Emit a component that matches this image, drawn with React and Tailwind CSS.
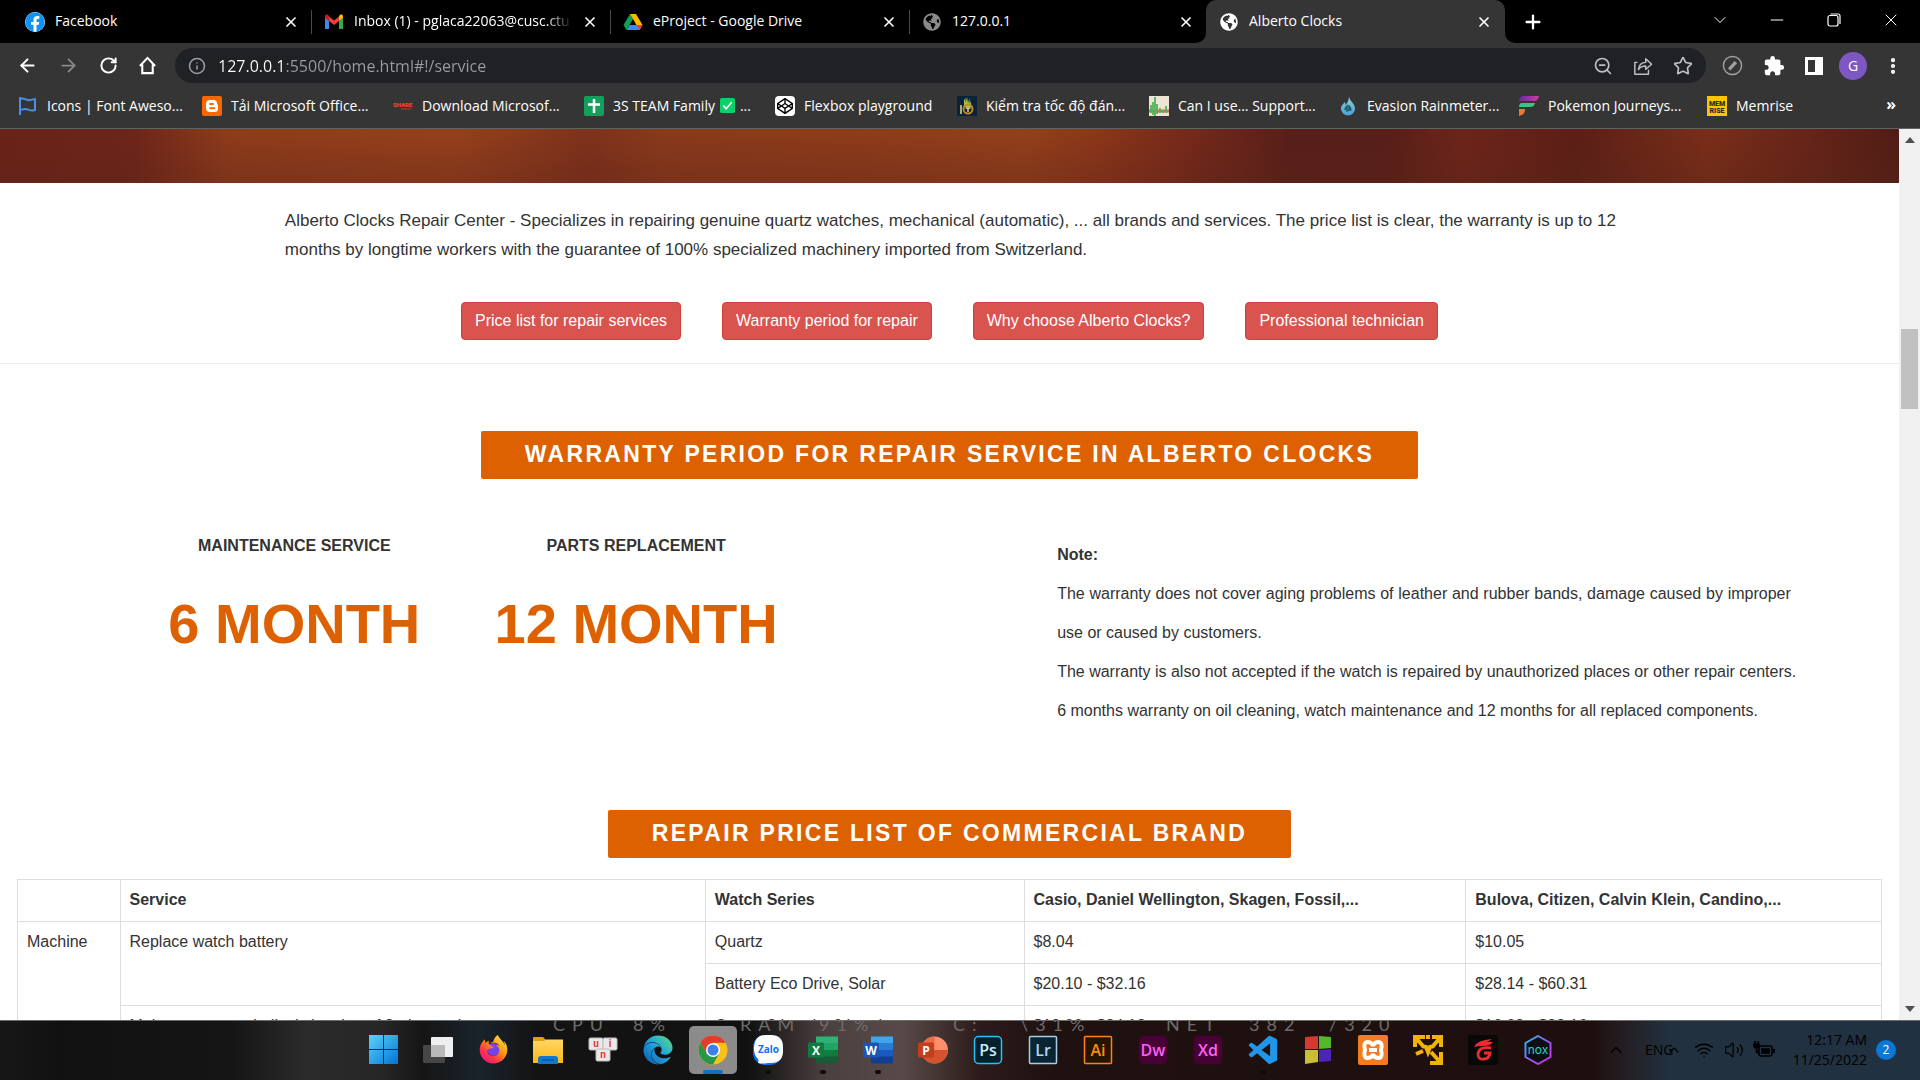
import React from "react";
import {
  ArrowLeft, ArrowRight, RotateCw, Info, ZoomOut, Star, X, Plus, ChevronDown, ChevronUp,
  Minus, EllipsisVertical, Wifi, Volume2,
} from "lucide-react";
import { FaFacebook, FaGlobeAmericas, FaEdge, FaFirefoxBrowser, FaCodepen } from "react-icons/fa";
import { MdExtension } from "react-icons/md";
import { BiLogoVisualStudio } from "react-icons/bi";

/* ---------- shared gradients ---------- */
function Gradients() {
  return (
    <svg className="absolute size-0" aria-hidden="true">
      <defs>
        <linearGradient id="g-edge" x1="0" y1="1" x2="1" y2="0">
          <stop offset="0" stopColor="#0c59a4" /><stop offset="0.5" stopColor="#1f9fe0" /><stop offset="1" stopColor="#5fe27a" />
        </linearGradient>
        <linearGradient id="g-fox" x1="1" y1="0" x2="0.2" y2="1">
          <stop offset="0" stopColor="#fff44f" /><stop offset="0.45" stopColor="#ff980e" /><stop offset="0.75" stopColor="#ff3647" /><stop offset="1" stopColor="#e31587" />
        </linearGradient>
        <linearGradient id="g-win" x1="0" y1="0" x2="1" y2="1">
          <stop offset="0" stopColor="#5bd3fb" /><stop offset="1" stopColor="#0273d4" />
        </linearGradient>
        <linearGradient id="g-folder" x1="0" y1="0" x2="0" y2="1">
          <stop offset="0" stopColor="#ffd766" /><stop offset="1" stopColor="#fbb917" />
        </linearGradient>
        <linearGradient id="g-nox" x1="0" y1="0" x2="1" y2="1">
          <stop offset="0" stopColor="#19c9e8" /><stop offset="0.45" stopColor="#8a63f5" /><stop offset="1" stopColor="#d12be0" />
        </linearGradient>
        <linearGradient id="g-f" x1="0" y1="0" x2="1" y2="0">
          <stop offset="0" stopColor="#5b2ea6" /><stop offset="1" stopColor="#d53c9f" />
        </linearGradient>
        <linearGradient id="g-drop" x1="0" y1="0" x2="0" y2="1">
          <stop offset="0" stopColor="#8fd3c8" /><stop offset="1" stopColor="#4d9fe0" />
        </linearGradient>
      </defs>
    </svg>
  );
}

/* ---------- small logos ---------- */
const Gmail = () => (
  <svg viewBox="0 0 20 16" className="w-5 h-4">
    <path d="M1 3v12h4V7z" fill="#4285f4" /><path d="M19 3v12h-4V7z" fill="#34a853" />
    <path d="M1 2.6 5 7l5 4 5-4V2.5L10 6.5 5 2.5z" fill="#ea4335" />
    <path d="M1 3.5V2.4C1 .6 3 .2 4 1l1 1v5L1 4z" fill="#c5221f" /><path d="M19 3.5V2.4C19 .6 17 .2 16 1l-1 1v5l4-3z" fill="#fbbc04" />
  </svg>
);
const Drive = () => (
  <svg viewBox="0 0 20 18" className="w-5 h-[18px]">
    <path d="M7 1 .5 12l3 5L10 6z" fill="#0f9d58" /><path d="M7 1h6l6.500 11h-6z" fill="#ffba00" />
    <path d="M6.500 12h13l-3 5h-13z" fill="#4285f4" /><path d="M13.500 12h6l-3 5z" fill="#ea4335" />
  </svg>
);
const Share = () => (
  <svg viewBox="0 0 22 22" className="size-5 text-[#bdbfc2]" fill="none" stroke="currentColor" strokeWidth="1.6" strokeLinejoin="round">
    <path d="M5 7H2v13h15v-5" /><path d="M6 15c.5-5 3-8 8-8V3l6.500 6L14 14.500V11c-4 0-6.500 1.500-8 4z" />
  </svg>
);
const Blogger = () => (
  <svg viewBox="0 0 20 20" className="size-5"><rect width="20" height="20" rx="2" fill="#f60" />
    <path d="M8 4h3.500A3.500 3.500 0 0 1 15 7.500V8l1 1v3.500a3.500 3.500 0 0 1-3.500 3.500H8a4 4 0 0 1-4-4V8a4 4 0 0 1 4-4z" fill="#fff" />
    <path d="M8 8h3M8 12.200h4.500" stroke="#f60" strokeWidth="1.800" strokeLinecap="round" /></svg>
);
const ShareTag = () => (
  <svg viewBox="0 0 20 20" className="size-5"><text x="0" y="11" fontSize="6" fontWeight="900" fontFamily="Roboto" fill="#f04a2a">SHARE</text>
    <path d="M8 13h10" stroke="#a3331f" strokeWidth="1.500" /></svg>
);
const Sheet = () => (
  <svg viewBox="0 0 20 20" className="size-5"><rect width="20" height="20" rx="2" fill="#12a15c" />
    <path d="M10 3v14M4 8.500h12" stroke="#fff" strokeWidth="2.500" /></svg>
);
const Pen = () => (
  <span className="flex size-5 items-center justify-center rounded-sm bg-white"><FaCodepen className="size-4 text-black" /></span>
);
const FlagIcon = () => (
  <svg viewBox="0 0 20 20" className="size-5" fill="none" stroke="#4a8fe7" strokeWidth="2" strokeLinejoin="round">
    <path d="M2 1v18M2 3c5-2 6 2 10 1 2 0 4-1 5-1v11c-5 2-6-1-10-1-2 0-4 1-5 1" />
  </svg>
);
const Typing = () => (
  <svg viewBox="0 0 20 20" className="size-5"><rect width="20" height="20" fill="#0b2239" />
    <path d="M7 9V4l1.500-2v5L10 1l1 6 1.500-5v6L14 5v6H7z" fill="#a8c64a" /><circle cx="11" cy="13" r="4.500" fill="none" stroke="#c08a1c" strokeWidth="2" />
    <path d="M4 9v9M8.500 12h5M11 12v4" stroke="#e6d68c" strokeWidth="1.500" /></svg>
);
const CanIUse = () => (
  <svg viewBox="0 0 20 20" className="size-5"><rect width="20" height="20" fill="#eee4d6" /><path d="M0 15h20" stroke="#dd6d5a" strokeWidth="3" />
    <path d="M2 17V9M4 19V6M6 20V1M8 18V8M11 17v-5M14 17v-3M17 17v-7" stroke="#4fb35a" strokeWidth="1.800" /></svg>
);
const Drop = () => (
  <svg viewBox="0 0 20 20" className="size-5"><path d="M11 0c0 5 6 7 6 12.500a7 7 0 0 1-14 0C3 9 6 8 6.500 6c1 1 1 2 .800 3C9.500 7 11 4 11 0z" fill="url(#g-drop)" />
    <path d="M7 14c0-2 1-3 2-4v5l2-1v-4c1.500 1 2 3 1.500 5" stroke="#1c5a63" strokeWidth="1.500" fill="none" /></svg>
);
const FLogo = () => (
  <svg viewBox="0 0 20 20" className="size-5"><path d="M5 0h15c-1 3-2 5-5 5H0c0-3 2-5 5-5z" fill="url(#g-f)" />
    <path d="M3 7h13c-1 3-2 4-5 4H0c0-2 1-4 3-4z" fill="#3fc28a" /><path d="M0 13h6c0 4-2 6-6 7z" fill="#f4762a" /></svg>
);
const Memrise = () => (
  <svg viewBox="0 0 20 20" className="size-5"><rect width="20" height="20" fill="#ffc400" />
    <text x="10" y="9.500" textAnchor="middle" fontSize="7" fontWeight="900" fontFamily="Roboto" fill="#2b2b2b">MEM</text>
    <text x="10" y="16.500" textAnchor="middle" fontSize="7" fontWeight="900" fontFamily="Roboto" fill="#2b2b2b">RISE</text></svg>
);

/* ---------- browser chrome ---------- */
const TABS = [
  { title: "Facebook", icon: <FaFacebook className="size-5 rounded-full bg-white text-[#1193f5]" /> },
  { title: "Inbox (1) - pglaca22063@cusc.ctu", icon: <Gmail />, fade: true },
  { title: "eProject - Google Drive", icon: <Drive /> },
  { title: "127.0.0.1", icon: <FaGlobeAmericas className="size-[18px] text-[#8a8a8a]" />, last: true },
];

function TabBody({ icon, title, fade }) {
  return (
    <>
      <span className="flex w-5 shrink-0 justify-center">{icon}</span>
      <span className={"min-w-0 flex-1 overflow-hidden whitespace-nowrap pb-[2px]" + (fade ? " [mask-image:linear-gradient(to_right,black_88%,transparent)]" : "")}>{title}</span>
      <button aria-label={"Close " + title} className="shrink-0"><X className="size-4" strokeWidth={2.5} /></button>
    </>
  );
}

function TabStrip() {
  return (
    <div className="flex h-[43px] shrink-0 bg-black pl-[13px] text-[14px] text-white">
      {TABS.map((t) => (
        <div key={t.title} className={"flex shrink items-center " + (t.last ? "w-[296px]" : "w-[299px]")}>
          <div className="flex min-w-0 flex-1 items-center gap-[10px] px-3"><TabBody {...t} /></div>
          {!t.last && <span className="h-6 w-px bg-[#4a4a4a]" />}
        </div>
      ))}
      <div className="flex shrink">
        <span className="-ml-[10px] flex w-[10px] bg-[#353535]"><span className="flex-1 rounded-br-[10px] bg-black" /></span>
        <div className="flex w-[299px] items-center gap-[10px] rounded-t-[10px] bg-[#353535] px-[13px]">
          <TabBody title="Alberto Clocks" icon={<FaGlobeAmericas className="size-[18px]" />} />
        </div>
        <span className="flex w-[10px] bg-[#353535]"><span className="flex-1 rounded-bl-[10px] bg-black" /></span>
      </div>
      <button aria-label="New tab" className="ml-[7px] flex items-center"><Plus className="size-[22px]" strokeWidth={2.5} /></button>
      <div className="ml-auto flex pb-1">
        <button aria-label="Search tabs" className="flex w-[57px] items-center justify-center"><ChevronDown className="size-5" strokeWidth={1.2} /></button>
        <button aria-label="Minimize" className="flex w-[57px] items-center justify-center"><Minus className="size-5" strokeWidth={1.2} /></button>
        <button aria-label="Restore" className="flex w-[57px] items-center justify-center">
          <svg viewBox="0 0 14 14" className="size-[14px]" fill="none" stroke="white" strokeWidth="1.200"><rect x="1" y="2.500" width="10" height="10.500" rx="2" /><path d="M3.500 1H11a2 2 0 0 1 2 2v8" /></svg>
        </button>
        <button aria-label="Close window" className="flex w-[58px] items-center justify-center"><X className="size-5" strokeWidth={1.2} /></button>
      </div>
    </div>
  );
}

function Toolbar() {
  return (
    <div className="flex h-[45px] shrink-0 items-center pl-[17px] pr-[17px] text-white">
      <div className="flex items-center gap-5">
        <button aria-label="Back"><ArrowLeft className="size-[21px]" strokeWidth={2.2} /></button>
        <button aria-label="Forward"><ArrowRight className="size-[21px] text-[#8b8b8b]" strokeWidth={2} /></button>
        <button aria-label="Reload"><RotateCw className="size-[19px]" strokeWidth={2.5} /></button>
        <button aria-label="Home">
          <svg viewBox="0 0 20 20" className="size-[19px]" fill="none" stroke="white" strokeWidth="2.200"><path d="M2 10.500 10 2l8 8.500M4.500 9v9h11V9" /></svg>
        </button>
      </div>
      <div className="ml-[18px] flex h-[35px] min-w-0 flex-1 items-center rounded-full bg-[#202124] pl-[13px] pr-[13px]">
        <Info className="size-[18px] text-[#9aa0a6]" />
        <input aria-label="Address" type="text" defaultValue="127.0.0.1:5500/home.html#!/service"
          className="ml-3 min-w-0 flex-1 bg-[linear-gradient(90deg,#ffffff_67px,#9a9ca0_67px)] bg-clip-text text-[16px] text-transparent outline-none" />
        <div className="flex items-center gap-5 text-[#bdbfc2]">
          <ZoomOut className="size-5" /><Share /><Star className="size-5" />
        </div>
      </div>
      <div className="ml-4 flex items-center gap-5">
        <svg viewBox="0 0 22 22" className="size-[21px]" fill="none"><circle cx="11" cy="11" r="9.500" stroke="#a0a0a0" strokeWidth="1.500" /><path d="m7.500 15 7-7.500" stroke="#a0a0a0" strokeWidth="3.500" /></svg>
        <MdExtension className="size-[22px]" />
        <svg viewBox="0 0 18 18" className="size-[18px]"><path fillRule="evenodd" d="M0 0h18v18H0zM3 3v12h7V3z" fill="white" /></svg>
        <span className="-mx-1 flex size-7 items-center justify-center rounded-full bg-[#7e57c2] text-[14px]">G</span>
        <EllipsisVertical className="size-5" strokeWidth={3} />
      </div>
    </div>
  );
}

const BOOKMARKS = [
  ["Icons | Font Aweso...", <FlagIcon key="i" />, "w-[184px]"],
  ["Tải Microsoft Office...", <Blogger key="i" />, "w-[191px]"],
  ["Download Microsof...", <ShareTag key="i" />, "w-[191px]"],
  ["3S TEAM Family", <Sheet key="i" />, "w-[191px]"],
  ["Flexbox playground", <Pen key="i" />, "w-[182px]"],
  ["Kiểm tra tốc độ đán...", <Typing key="i" />, "w-[192px]"],
  ["Can I use... Support...", <CanIUse key="i" />, "w-[189px]"],
  ["Evasion Rainmeter...", <Drop key="i" />, "w-[181px]"],
  ["Pokemon Journeys...", <FLogo key="i" />, "w-[188px]"],
  ["Memrise", <Memrise key="i" />, "w-[120px]"],
];

function Bookmarks() {
  return (
    <nav className="flex h-[41px] shrink-0 items-center border-b border-[#606265] pb-1 pl-[18px] pr-6 text-[14px] text-white">
      {BOOKMARKS.map(([label, icon, w]) => (
        <a key={label} href="#" className={"flex shrink items-center gap-[9px] whitespace-nowrap " + w}>
          <span className="shrink-0">{icon}</span>
          <span className="flex items-center pb-[2px]">{label}
            {label === "3S TEAM Family" && (
              <><svg viewBox="0 0 16 16" className="mx-[5px] size-[15px]"><rect width="16" height="16" rx="2" fill="#0bd168" /><path d="m3.500 8 3 3.500 6-7" stroke="white" strokeWidth="1.800" fill="none" /></svg>...</>
            )}
          </span>
        </a>
      ))}
      <button aria-label="More bookmarks" className="ml-auto pb-1 text-[16px] font-bold">»</button>
    </nav>
  );
}

/* ---------- web page ---------- */
function Ribbon({ children }) {
  return (
    <h2 className="mx-auto flex h-12 w-fit items-center rounded-xs bg-[#de6101] px-11 pb-[2px] text-[23px] font-bold tracking-widest text-white">{children}</h2>
  );
}

const LINKS = ["Price list for repair services", "Warranty period for repair", "Why choose Alberto Clocks?", "Professional technician"];
const cell = "border border-[#dddddd] px-[9px] pt-2 pb-[9px] text-left align-top leading-6";

function PriceTable() {
  return (
    <table className="mx-[17px] mt-[21px] w-[calc(100%-34px)] table-fixed border-collapse text-[16px]">
      <colgroup>
        <col className="w-[5.5%]" /><col className="w-[31.4%]" /><col className="w-[17.1%]" /><col className="w-[23.7%]" /><col />
      </colgroup>
      <thead>
        <tr>
          <td className={cell}></td>
          <th className={cell}>Service</th>
          <th className={cell}>Watch Series</th>
          <th className={cell}>Casio, Daniel Wellington, Skagen, Fossil,...</th>
          <th className={cell}>Bulova, Citizen, Calvin Klein, Candino,...</th>
        </tr>
      </thead>
      <tbody>
        <tr>
          <td className={cell} rowSpan={3}>Machine</td>
          <td className={cell} rowSpan={2}>Replace watch battery</td>
          <td className={cell}>Quartz</td><td className={cell}>$8.04</td><td className={cell}>$10.05</td>
        </tr>
        <tr><td className={cell}>Battery Eco Drive, Solar</td><td className={cell}>$20.10 - $32.16</td><td className={cell}>$28.14 - $60.31</td></tr>
        <tr>
          <td className={cell}>Maintenance, periodical cleaning of 3-pin watch</td>
          <td className={cell}>Quartz 3 hands, 6 hands</td><td className={cell}>$12.06 - $24.12</td><td className={cell}>$16.08 - $32.16</td>
        </tr>
      </tbody>
    </table>
  );
}

function ServicePage() {
  return (
    <main className="min-w-0 flex-1 overflow-hidden bg-white font-['Liberation_Sans',Arial,sans-serif] text-[#333333]">
      <div className="h-[54px] bg-[linear-gradient(180deg,transparent,rgba(90,35,25,0.35)),linear-gradient(90deg,#6b2218_0%,#6e2519_7%,#8f3c1a_12%,#96401c_24%,#7f321b_31%,#8b3a1b_35%,#8f3c1a_46%,#94401b_54%,#8c3619_58%,#74281a_63%,#571f19_68%,#561f18_73%,#6e2419_77%,#5b1f16_83%,#7a2e18_90%,#6b2618_94%,#4f1d16_100%)]" />
      <p className="mt-[23px] pl-[15%] pr-[14%] text-[17px] leading-[29px]">
        Alberto Clocks Repair Center - Specializes in repairing genuine quartz watches, mechanical (automatic), ... all brands and services. The price list is clear, the warranty is up to 12 months by longtime workers with the guarantee of 100% specialized machinery imported from Switzerland.
      </p>
      <div className="mt-[38px] flex justify-center gap-[41px]">
        {LINKS.map((l) => (
          <button key={l} className="h-[38px] rounded-[4px] border border-[#d43f3a] bg-[#d9534f] px-[13px] text-[16px] text-white">{l}</button>
        ))}
      </div>
      <hr className="mt-[23px] mb-[67px] border-[#eeeeee]" />
      <Ribbon>WARRANTY PERIOD FOR REPAIR SERVICE IN ALBERTO CLOCKS</Ribbon>
      <section className="mt-[55px] flex pl-[6.500%] pr-[5.700%] text-[16px]">
        {[["MAINTENANCE SERVICE", "6 MONTH"], ["PARTS REPLACEMENT", "12 MONTH"]].map(([a, b]) => (
          <div key={a} className="w-[20.500%] text-center font-bold">
            <p className="leading-6">{a}</p>
            <p className="mt-8 text-[56px] leading-[68px] text-[#de6101]">{b}</p>
          </div>
        ))}
        <div className="ml-auto w-[44%] pt-px text-justify leading-[39px]">
          <p className="font-bold">Note:</p>
          <p>The warranty does not cover aging problems of leather and rubber bands, damage caused by improper use or caused by customers.</p>
          <p className="whitespace-nowrap">The warranty is also not accepted if the watch is repaired by unauthorized places or other repair centers.</p>
          <p className="mb-20">6 months warranty on oil cleaning, watch maintenance and 12 months for all replaced components.</p>
        </div>
      </section>
      <Ribbon>REPAIR PRICE LIST OF COMMERCIAL BRAND</Ribbon>
      <PriceTable />
    </main>
  );
}

function ScrollBar() {
  return (
    <div className="flex w-[21px] shrink-0 flex-col items-center bg-[#f1f1f1] py-2">
      <svg viewBox="0 0 10 6" className="h-[6px] w-[10px]"><path d="m0 6 5-6 5 6z" fill="#505050" /></svg>
      <div className="mt-[186px] h-[80px] w-[17px] bg-[#c1c1c1]" />
      <svg viewBox="0 0 10 6" className="mt-auto h-[6px] w-[10px]"><path d="m0 0 5 6 5-6z" fill="#505050" /></svg>
    </div>
  );
}

/* ---------- taskbar ---------- */
const Adobe = ({ t, bg, fg, border, r = 1 }) => (
  <svg viewBox="0 0 30 30" className="size-[30px]"><rect x="1.500" y="1.500" width="27" height="27" rx={r} fill={bg} stroke={border || bg} strokeWidth="1.500" />
    <text x="15" y="20.500" textAnchor="middle" fontSize="16" fontWeight="600" fontFamily="Open Sans" fill={fg}>{t}</text></svg>
);
const Office = ({ t, c, tile }) => (
  <svg viewBox="0 0 30 30" className="size-[30px]">
    <rect x="8" y="1.500" width="22" height="7" fill={c[0]} /><rect x="8" y="8" width="22" height="7" fill={c[1]} />
    <rect x="8" y="15" width="22" height="7" fill={c[2]} /><rect x="8" y="21.500" width="22" height="7" fill={c[3]} />
    <rect x="0" y="7.500" width="16" height="15" rx="1.500" fill={tile} />
    <text x="8" y="19.500" textAnchor="middle" fontSize="12" fontWeight="700" fontFamily="Open Sans" fill="white">{t}</text></svg>
);
const APPS = [
  ["Start", <svg viewBox="0 0 29 29" className="size-[29px]"><path d="M0 0h14v14H0zM15 0h14v14H15zM0 15h14v14H0zM15 15h14v14H15z" fill="url(#g-win)" /></svg>],
  ["Task view", <svg viewBox="0 0 30 28" className="w-[30px] h-7"><rect x="0" y="9" width="22" height="18" rx="1" fill="#464646" /><rect x="8" y="1" width="22" height="20" rx="1" fill="#efefef" /><path d="M8 9h14v12H8z" fill="#b9b9b9" /></svg>],
  ["Firefox", <span className="relative"><span className="absolute inset-[8px] rounded-full bg-[#7542e5]" /><FaFirefoxBrowser className="relative size-[29px]" fill="url(#g-fox)" /></span>],
  ["Explorer", <svg viewBox="0 0 30 28" className="w-[30px] h-7"><path d="M0 2q0-1 1-1h9l3 3h16v4H0z" fill="#e0a012" /><path d="M0 5h11l2-1.500h17V27H0z" fill="url(#g-folder)" /><path d="M5 28v-5q0-3 3-3h14q3 0 3 3v5z" fill="#1278cf" /><path d="M9 24h12" stroke="#0a4f91" strokeWidth="1.200" /></svg>],
  ["UniKey", <svg viewBox="0 0 30 28" className="w-[30px] h-7">{[[1, 2, "u"], [15, 2, "i"], [8, 13, "n"]].map(([x, y, t]) => <g key={t}><rect x={x} y={y} width="14" height="12" rx="1.500" fill="#e9e9e9" stroke="#bcbcbc" /><text x={x + 7} y={y + 9} textAnchor="middle" fontSize="10" fontWeight="700" fontFamily="Roboto" fill="#e23a3a">{t}</text></g>)}</svg>],
  ["Edge", <FaEdge className="size-[30px]" fill="url(#g-edge)" />],
  ["Chrome", <svg viewBox="0 0 30 30" className="size-[30px]"><circle cx="15" cy="15" r="14.500" fill="#fbc116" /><path d="M2.400 7.800A14.500 14.500 0 0 1 27.600 7.800H15l-6.200 10.800z" fill="#e33b2e" /><path d="M2.400 7.800A14.500 14.500 0 0 0 15 29.500l6.200-11L15 21.500 8.800 18.500z" fill="#279847" /><circle cx="15" cy="15" r="7" fill="white" /><circle cx="15" cy="15" r="5.500" fill="#3f7fec" /></svg>],
  ["Zalo", <svg viewBox="0 0 30 30" className="size-[30px]"><rect width="29" height="30" rx="12" fill="#0b6cf5" /><path d="M13 0h5q12 0 12 12v4q0 12-12 12h-3q-6 1-10 0 1-2 0-4-4-4-4-10Q1 0 13 0z" fill="white" /><text x="15.500" y="17.500" textAnchor="middle" fontSize="10" fontWeight="700" fontFamily="Open Sans" fill="#1170f4">Zalo</text></svg>, true],
  ["Excel", <Office t="X" c={["#2fb274", "#21a366", "#107c41", "#185c37"]} tile="#117a42" />, true],
  ["Word", <Office t="W" c={["#41a5ee", "#2b7cd3", "#185abd", "#103f91"]} tile="#1b55b5" />, true],
  ["PowerPoint", <svg viewBox="0 0 30 30" className="size-[30px]"><circle cx="16.500" cy="15" r="13.500" fill="#ff8f6b" /><path d="M3 15a13.500 13.500 0 0 0 27 0z" fill="#d35230" /><path d="M3 15a13.500 13.500 0 0 1 13.500-13.500V15z" fill="#ed6c47" /><rect y="7.500" width="16" height="15" rx="1.500" fill="#c43e1c" /><text x="8" y="19.500" textAnchor="middle" fontSize="12" fontWeight="700" fontFamily="Open Sans" fill="white">P</text></svg>],
  ["Photoshop", <Adobe t="Ps" bg="#04202c" fg="#c8ecfb" border="#22c4f3" r={4} />],
  ["Lightroom", <Adobe t="Lr" bg="#0b2433" fg="#b1d6ea" border="#a8cde2" />],
  ["Illustrator", <Adobe t="Ai" bg="#261300" fg="#ff8a12" border="#ff7f18" />],
  ["Dreamweaver", <Adobe t="Dw" bg="#470137" fg="#ff5ff2" r={4} />],
  ["XD", <Adobe t="Xd" bg="#470137" fg="#ff61f6" r={4} />],
  ["VS Code", <BiLogoVisualStudio className="size-[34px] text-[#2196e8]" />, true],
  ["Windows tools", <svg viewBox="0 0 28 30" className="w-7 h-[30px]"><path d="M1 2l13-1v13H1z" fill="#d43a2f" /><path d="M15 1l12 1v11l-12 1z" fill="#53b82c" /><path d="M1 15h13v12L1 29z" fill="#c9bf34" /><path d="M15 15l12-1v12l-12 1z" fill="#4a25b8" /></svg>],
  ["XAMPP", <svg viewBox="0 0 30 30" className="size-[30px]"><rect width="30" height="30" rx="2" fill="#f47b20" /><path d="M9 7q5 0 6 4 1-4 6-4 4 1 2 8 2 7-2 8-5 0-6-4-1 4-6 4-4-1-2-8-2-7 2-8zM11 15h8" fill="none" stroke="white" strokeWidth="4" /></svg>],
  ["Tools", <svg viewBox="0 0 30 30" className="size-[30px]" fill="none" stroke="#f2b308" strokeWidth="4"><path d="M2 12V2h10M19 2h9v10M3 3l7 8M27 3l-7 8M15 0v4M9 11l4 1 2 5 2-5 4-1M3 19l7-3M18 17l9 10M28 17v11H17" /></svg>],
  ["Garena", <svg viewBox="0 0 30 30" className="size-[30px]"><rect width="30" height="30" rx="2" fill="#080808" /><path d="M6 12q3-7 18-8l-5 3 6 0q-3 4-10 4-6 0-9 1z" fill="#ee2b32" /><path d="M23 13q-12-2-13 6 0 6 6 5 5 0 6-6h-6" fill="none" stroke="#ee2b32" strokeWidth="2.800" /></svg>],
  ["Nox", <svg viewBox="0 0 30 30" className="size-[30px]"><path d="M15 1l12.500 7v14L15 29 2.500 22V8z" fill="#0f0e14" stroke="url(#g-nox)" strokeWidth="2" /><text x="15" y="18.500" textAnchor="middle" fontSize="12" fontFamily="Inter" fill="#16d9c5">nox</text></svg>],
];

const METER = [["CPU", "ml-[553px] w-[80px]"], ["8%", "w-[107px]"], ["RAM", "w-[79px]"], ["91%", "w-[134px]"], ["C:", "w-[67px]"], ["\\31%", "w-[146px]"], ["NET", "w-[83px]"], ["382", "w-[80px]"], ["/320", "w-[90px]"]];

const PluggedBattery = () => (
  <svg viewBox="0 0 22 20" className="ml-[9px] h-5 w-[22px]" fill="none" stroke="black" strokeWidth="1.600">
    <rect x="6" y="6" width="13" height="10" rx="2" /><path d="M9 9h7v4H9z" fill="black" /><path d="M21 9v4" strokeWidth="2" />
    <path d="M2 1v3M5 1v3M1 4h5v2q0 2-2.500 2T1 6zM3.500 8v4q0 1 2 1" fill="black" />
  </svg>
);

function Taskbar() {
  return (
    <footer className="relative flex h-[60px] shrink-0 items-center overflow-hidden border-t border-[#6b6b6b] bg-[linear-gradient(90deg,#171717_0%,#111_3%,#151515_12%,#2b2b2b_16%,#262626_20%,#151515_22%,#1a232b_25%,#131313_28%,#111_39%,#4b403f_43%,#584a48_47%,#2c1b1a_51%,#1e1110_55%,#1e0f0e_83%,#23191b_84%,#223140_87%,#203142_100%)] font-['Open_Sans','Noto_Sans',sans-serif]">
      <div className="absolute inset-x-0 -top-[7px] flex font-['Lato',sans-serif] text-[18px] leading-5 tracking-[7px] text-[#6f6b6b]">
        {METER.map(([t, w]) => <span key={t} className={"shrink-0 whitespace-nowrap " + w}>{t}</span>)}
      </div>
      <div className="relative ml-auto flex h-full items-center gap-[7px] pb-[2px]">
        {APPS.map(([name, icon, dot]) => (
          <button key={name} aria-label={name} className={"relative flex h-12 w-12 items-center justify-center rounded-[5px]" + (name === "Chrome" ? " bg-[#8b8b8b]" : "")}>
            {icon}
            {name === "Chrome" && <span className="absolute inset-x-[14px] bottom-0 h-1 rounded-full bg-[#0f6fc9]" />}
            {dot && <span className="absolute inset-x-[21px] bottom-0 h-1 rounded-full bg-[#0c0c0c]" />}
          </button>
        ))}
      </div>
      <div className="relative ml-11 mr-6 flex w-[290px] shrink-0 items-center pb-[2px] text-black">
        <ChevronUp className="size-5 shrink-0" strokeWidth={1.5} />
        <span className="ml-[19px] text-[14px]">ENG</span>
        <ChevronUp className="-ml-2 size-4 shrink-0" strokeWidth={1.8} />
        <Wifi className="ml-auto size-5 shrink-0" strokeWidth={1.8} />
        <Volume2 className="ml-[10px] size-5 shrink-0" strokeWidth={1.5} />
        <PluggedBattery />
        <div className="ml-3 w-[80px] shrink-0 whitespace-nowrap text-right text-[14px] leading-5"><p>12:17 AM</p><p>11/25/2022</p></div>
        <span className="ml-[9px] flex size-5 shrink-0 items-center justify-center rounded-full bg-[#0a78d6] text-[12px] text-white">2</span>
      </div>
    </footer>
  );
}

export default function App() {
  return (
    <div className="flex h-screen flex-col overflow-hidden bg-[#353535] font-['Open_Sans','Noto_Sans',sans-serif]">
      <Gradients />
      <TabStrip />
      <Toolbar />
      <Bookmarks />
      <div className="flex min-h-0 flex-1">
        <ServicePage />
        <ScrollBar />
      </div>
      <Taskbar />
    </div>
  );
}
